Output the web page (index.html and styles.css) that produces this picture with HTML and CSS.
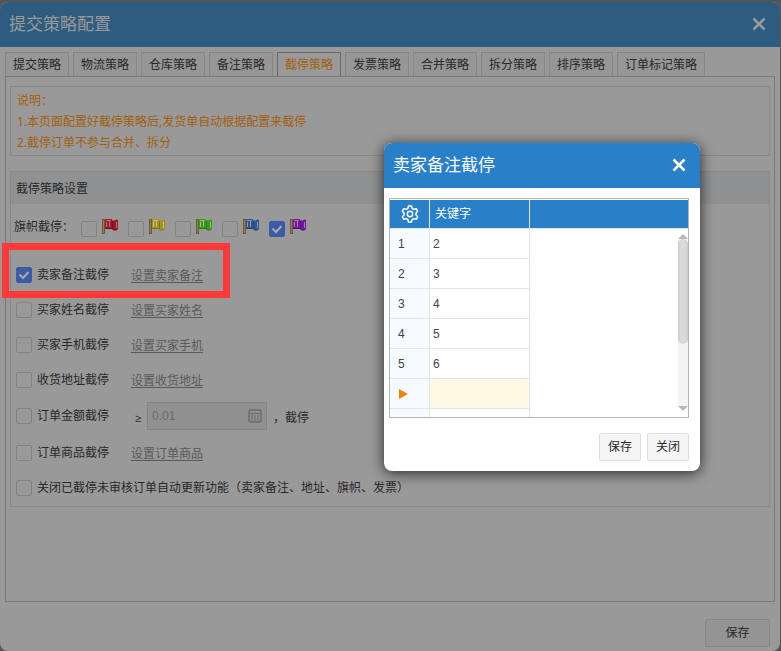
FILE: index.html
```
<!DOCTYPE html>
<html lang="zh-CN">
<head>
<meta charset="utf-8">
<title>提交策略配置</title>
<link rel="stylesheet" href="styles.css">
</head>
<body>
<svg class="defs" width="0" height="0">
  <symbol id="x" viewBox="0 0 14 14"><path d="M1.500 1.500l11 11M12.500 1.500l-11 11" stroke="currentColor" stroke-width="2.500" fill="none"/></symbol>
  <symbol id="flag" viewBox="0 0 16 16">
    <rect x="0" y="0" width="3" height="15" fill="#6f5834"/><rect x="1" y="1" width="1" height="13" fill="#967f52"/>
    <path d="M3.500 .5h6l1 1.500h2.500l1-1h1.500v9l-1 1h-3l-1.500-1.500H3.500Z" fill="currentColor" stroke="currentColor"/>
    <path d="M4 1.500h5M4.500 3v5M7.500 2v6M14.500 3v6" stroke="#fff" stroke-opacity=".4" fill="none"/>
    <path d="M10.500 2.500v7M3 9.500h7l1.500 1.500h3" stroke="#000" stroke-opacity=".25" fill="none"/>
  </symbol>
</svg>
<div class="page">
  <header class="title"><span>提交策略配置</span><svg class="x"><use href="#x"/></svg></header>
  <nav class="tabs">
    <a>提交策略</a><a>物流策略</a><a>仓库策略</a><a>备注策略</a><a class="on">截停策略</a><a>发票策略</a><a>合并策略</a><a>拆分策略</a><a>排序策略</a><a class="wide">订单标记策略</a>
  </nav>
  <main class="panel">
    <section class="notice"><p>说明：</p><p>1.本页面配置好截停策略后,发货单自动根据配置来截停</p><p>2.截停订单不参与合并、拆分</p></section>
    <section class="settings">
      <h2>截停策略设置</h2>
      <div class="flags"><span class="flags-label">旗帜截停：</span>
        <i class="box"></i><svg class="flag red"><use href="#flag"/></svg>
        <i class="box"></i><svg class="flag yellow"><use href="#flag"/></svg>
        <i class="box"></i><svg class="flag green"><use href="#flag"/></svg>
        <i class="box"></i><svg class="flag blue"><use href="#flag"/></svg>
        <i class="box checked"><svg viewBox="0 0 16 16"><path d="M3.500 7.500l3.500 3.500 5.500-6"/></svg></i><svg class="flag purple"><use href="#flag"/></svg>
      </div>
      <div class="row first"><i class="box checked"><svg viewBox="0 0 16 16"><path d="M3.500 7.500l3.500 3.500 5.500-6"/></svg></i><span class="name">卖家备注截停</span><a>设置卖家备注</a><div class="highlight"></div></div>
      <div class="row"><i class="box"></i><span class="name">买家姓名截停</span><a>设置买家姓名</a></div>
      <div class="row"><i class="box"></i><span class="name">买家手机截停</span><a>设置买家手机</a></div>
      <div class="row"><i class="box"></i><span class="name">收货地址截停</span><a>设置收货地址</a></div>
      <div class="row amount"><i class="box"></i><span class="name">订单金额截停</span><span class="gte">≥</span><span class="input">0.01<svg viewBox="0 0 14 14"><rect x="1" y="1" width="12" height="12" rx="1.500" stroke-width="1.500"/><path d="M1 4.500h12" stroke-width="1.300"/><path d="M3 7h2M6 7h2M9 7h2M3 9h2M6 9h2M9 9h2M3 11h2M6 11h2M9 11h2"/></svg></span><span class="after">，截停</span></div>
      <div class="row goods"><i class="box"></i><span class="name">订单商品截停</span><a>设置订单商品</a></div>
      <div class="row last"><i class="box"></i><span>关闭已截停未审核订单自动更新功能（卖家备注、地址、旗帜、发票）</span></div>
    </section>
  </main>
  <footer class="foot"><button>保存</button></footer>
</div>
<div class="modal">
  <header class="title"><span>卖家备注截停</span><svg class="x"><use href="#x"/></svg></header>
  <div class="grid">
    <div class="head"><span class="idx"><svg class="gear" viewBox="0 0 18 18"><path d="M7.500 1h3l.6 2.400 1.700 1 2.400-.7 1.500 2.600L15 8v2l1.700 1.700-1.500 2.600-2.400-.7-1.700 1-.6 2.400h-3l-.6-2.400-1.700-1-2.400.7-1.500-2.600L3 10V8L1.300 6.300l1.500-2.600 2.400.7 1.700-1z"/><circle cx="9" cy="9" r="2.700"/></svg></span><span class="key">关键字</span></div>
    <div class="line"><span class="idx">1</span><span class="key">2</span></div>
    <div class="line"><span class="idx">2</span><span class="key">3</span></div>
    <div class="line"><span class="idx">3</span><span class="key">4</span></div>
    <div class="line"><span class="idx">4</span><span class="key">5</span></div>
    <div class="line"><span class="idx">5</span><span class="key">6</span></div>
    <div class="line new"><span class="idx"><i class="arrow"></i></span><span class="key"></span></div>
    <div class="line"><span class="idx"></span><span class="key"></span></div>
    <div class="scroll"><i class="up"></i><i class="thumb"></i><i class="down"></i></div>
  </div>
  <div class="actions"><button>保存</button><button>关闭</button></div>
</div>
</body>
</html>
```
FILE: styles.css
```
* { box-sizing: border-box; }
body { margin: 0; width: 781px; height: 651px; overflow: hidden; background: #555; color: #282828; font: 12px/20px "Noto Sans", "Noto Sans CJK SC", sans-serif; position: relative; padding-top: 2px; }
.defs { position: absolute; }
.page { width: 780px; height: 649px; background: #999; border-radius: 8px; overflow: hidden; }
.title { height: 45px; padding: 0 14px 1px 9px; display: flex; align-items: center; justify-content: space-between; background: #2e5c80; color: #999; font-size: 17px; line-height: 24px; }
.x { width: 14px; height: 14px; }
.tabs { display: flex; gap: 4px; padding: 5px 5px 0; height: 29px; }
.tabs a { width: 64px; height: 24px; border: 1px solid #858585; border-bottom: 0; text-align: center; line-height: 24px; background: #969696; white-space: nowrap; }
.tabs .on { color: #a35f0c; border-color: #6b6b6b; background: #999; }
.tabs .wide { width: 88px; }
.panel { margin: 0 5px; height: 526px; border: 1px solid #7a7a7a; padding: 9px 4px; }
.notice { height: 70px; border: 1px solid #888; padding: 3px 6px; color: #a35f0c; line-height: 21px; }
.notice p { margin: 0; }
.settings { margin-top: 15px; height: 336px; border: 1px solid #888; }
h2 { margin: 0; height: 32px; padding-left: 5px; font-size: 12px; font-weight: 400; line-height: 33px; background: #8f9193; }
.flags { height: 53px; padding: 15px 0 0 3px; display: flex; align-items: flex-start; }
.flags-label { width: 67px; line-height: 16px; white-space: nowrap; }
.box { flex: none; width: 16px; height: 16px; border: 1px solid #838383; border-radius: 2px; display: block; }
.flags .box { margin-top: 2px; }
.checked { background: #3b5ca4; border-color: #3b5ca4; }
.checked svg { display: block; width: 16px; height: 16px; margin: -1px; fill: none; stroke: #aaa; stroke-width: 2; }
.flag { width: 16px; height: 16px; margin: 0 10px 0 5px; }
.red { color: #9b1730; }
.yellow { color: #a39322; }
.green { color: #3b9b1c; }
.blue { color: #32558f; }
.purple { color: #7217a0; }
.row { height: 35px; padding: 1px 0 0 5px; display: flex; align-items: center; position: relative; white-space: nowrap; }
.row .box { margin-right: 5px; }
.name { width: 94px; }
.row a { padding-top: 2px; color: #595959; text-decoration: underline; text-underline-offset: 2px; }
.highlight { position: absolute; left: -9px; top: -14px; width: 228px; height: 55px; border: 7px solid #fd3939; }
.amount { height: 38px; padding-top: 0; }
.goods { height: 36px; padding-top: 0; }
.last { height: 34px; padding-top: 0; }
.gte { width: 16px; padding: 3px 0 0 4px; font: 11px/20px "Liberation Sans", sans-serif; }
.input { width: 120px; height: 28px; border: 1px solid #848484; background: #919191; color: #696969; padding: 0 4px; display: flex; align-items: center; justify-content: space-between; font-family: "Liberation Sans", sans-serif; }
.input svg { width: 14px; height: 14px; fill: none; stroke: #6c6c6c; }
.after { margin-left: 6px; padding-top: 3px; }
.foot { display: flex; justify-content: flex-end; padding: 17px 10px 0; }
button { width: 65px; height: 28px; padding: 0; border: 1px solid #868686; border-radius: 2px; background: #949494; color: #282828; font: inherit; }
.modal { position: absolute; left: 384px; top: 143px; width: 316px; height: 328px; border-radius: 8px; background: #fff; box-shadow: 0 2px 14px rgba(0,0,0,.75); overflow: hidden; color: #444; }
.modal .title { background: #2980c8; color: #fff; }
.grid { position: relative; margin: 10px 11px 0 5px; height: 220px; border: 1px solid #b5b5b5; padding-top: 1px; overflow: hidden; font-family: "Liberation Sans", "Noto Sans CJK SC", sans-serif; }
.head, .line { display: flex; height: 30px; }
.head { height: 29px; background: #2980c8; color: #fff; border-bottom: 1px solid #dce8f1; }
.idx, .key { border-right: 1px solid #e5e5e5; border-bottom: 1px solid #e5e5e5; display: flex; align-items: center; }
.idx { width: 40px; background: #f6fbff; padding-left: 8px; }
.key { width: 100px; padding-left: 3px; }
.head .idx, .head .key { border-bottom: 0; background: none; }
.head .key { padding-left: 5px; }
.head .idx { padding: 0 0 1px 11px; }
.gear { width: 18px; height: 18px; fill: none; stroke: #fff; stroke-width: 1.5; stroke-linejoin: round; }
.new .key { background: #fff9e3; }
.arrow { margin-left: 1px; border: 4.5px solid transparent; border-width: 5px 0 5px 9px; border-left-color: #f08206; }
.scroll { position: absolute; right: 0; top: 35px; width: 10px; height: 177px; display: flex; flex-direction: column; background: linear-gradient(transparent 5px, #f4f4f4 5px, #f4f4f4 172px, transparent 172px); }
.up { border: 5px solid transparent; border-top: 0; border-bottom-color: #b8b8b8; }
.thumb { height: 105px; border-radius: 5px; background: linear-gradient(90deg, #ccc, #dadada 30%, #dadada 70%, #ccc); }
.down { margin-top: auto; border: 5px solid transparent; border-bottom: 0; border-top-color: #b8b8b8; }
.actions { display: flex; justify-content: flex-end; gap: 6px; padding: 15px 11px 0; }
.actions button { width: 42px; border-color: #ddd; background: #f5f5f5; }
```
